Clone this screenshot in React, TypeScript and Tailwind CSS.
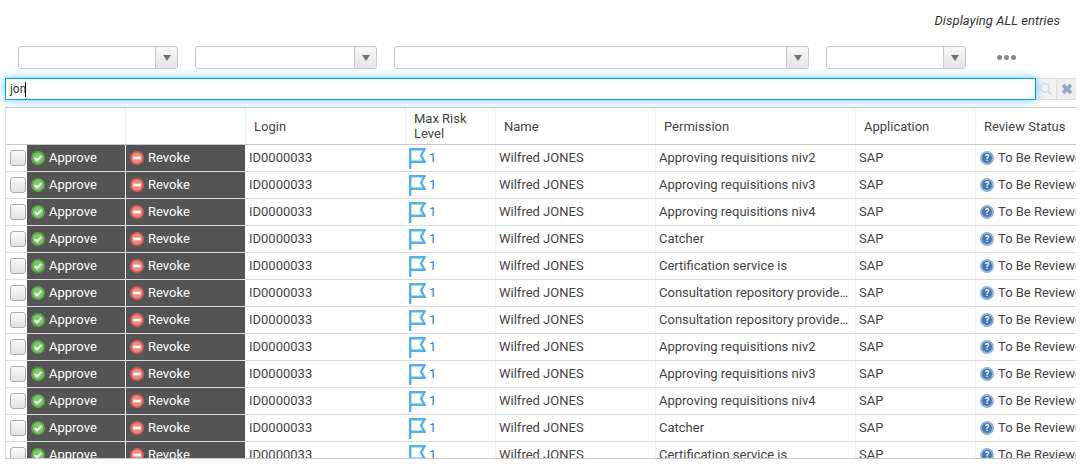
import React from "react";

const perms = [
  "Approving requisitions niv2",
  "Approving requisitions niv3",
  "Approving requisitions niv4",
  "Catcher",
  "Certification service is",
  "Consultation repository provided by the service",
  "Consultation repository provided by the service",
  "Approving requisitions niv2",
  "Approving requisitions niv3",
  "Approving requisitions niv4",
  "Catcher",
  "Certification service is",
];

function Select({ w }: { w: string }) {
  return (
    <div className={`${w} flex h-[23px] rounded-[3px] border border-[#c8c8c8] bg-white`}>
      <div className="flex-1" />
      <div className="flex w-[22px] items-center justify-center rounded-r-[2px] border-l border-[#c8c8c8] bg-gradient-to-b from-[#f8f8f8] to-[#e4e4e4]">
        <svg width="8" height="6" viewBox="0 0 8 6"><path d="M0 0h8L4 6z" fill="#707070" /></svg>
      </div>
    </div>
  );
}

function ApproveIcon() {
  return (
    <svg width="14" height="14" viewBox="0 0 14 14" className="shrink-0">
      <circle cx="7" cy="7" r="7" fill="#56a845" />
      <circle cx="7" cy="7" r="5.2" fill="#7cc86a" />
      <path d="M3.8 7.2l2.3 2.3L10.4 4.8" fill="none" stroke="#fff" strokeWidth="1.9" />
    </svg>
  );
}

function RevokeIcon() {
  return (
    <svg width="14" height="14" viewBox="0 0 14 14" className="shrink-0">
      <circle cx="7" cy="7" r="7" fill="#dc5a52" />
      <circle cx="7" cy="7" r="5.2" fill="#ef8d84" />
      <rect x="3.3" y="5.7" width="7.4" height="2.6" fill="#fff" />
    </svg>
  );
}

function FlagIcon() {
  return (
    <svg width="17" height="21" viewBox="0 0 17 21" className="shrink-0">
      <path d="M1.2 21V1.3h14.4L12 7.5l3.6 6.3H1.2" fill="none" stroke="#52b4e6" strokeWidth="2.4" />
    </svg>
  );
}

function HelpIcon() {
  return (
    <svg width="14" height="14" viewBox="0 0 14 14" className="shrink-0">
      <circle cx="7" cy="7" r="7" fill="#8fb0d8" />
      <circle cx="7" cy="7" r="4.9" fill="#4377b4" />
      <text x="7" y="10" textAnchor="middle" fontSize="8.5" fontWeight="700" fill="#fff" fontFamily="Roboto, sans-serif">?</text>
    </svg>
  );
}

const cols = "grid grid-cols-[120px_119px_160px_90px_160px_200px_120px_120px]";

function Head({ children }: { children?: React.ReactNode }) {
  return (
    <div className="flex items-center border-l border-[#f0f0f0] pl-[8px] text-[13px] leading-[15px] text-[#444]">
      {children}
    </div>
  );
}

function Row({ perm }: { perm: string }) {
  return (
    <div className={`${cols} h-[27px] border-b border-[#dcdcdc] text-[13px] leading-[26px] text-[#444]`}>
      <div className="flex">
        <div className="flex w-[21px] items-center pl-[4px]">
          <div className="h-[16px] w-[16px] rounded-[3px] border border-[#aaa] bg-gradient-to-b from-[#fafafa] to-[#e2e2e2]" />
        </div>
        <div className="flex flex-1 items-center gap-[4px] border-r border-[#eee] bg-[#545454] pl-[4px] text-white">
          <ApproveIcon />
          Approve
        </div>
      </div>
      <div className="flex items-center gap-[4px] bg-[#545454] pl-[4px] text-white">
        <RevokeIcon />
        Revoke
      </div>
      <div className="pl-[4px]">ID0000033</div>
      <div className="flex items-center gap-[3px] pl-[4px] text-[#2c7fc0]">
        <FlagIcon />
        1
      </div>
      <div className="border-l border-[#f0f0f0] pl-[3px]">Wilfred JONES</div>
      <div className="truncate border-l border-[#f0f0f0] pl-[3px] pr-[5px]">{perm}</div>
      <div className="border-l border-[#f0f0f0] pl-[3px]">SAP</div>
      <div className="flex items-center gap-[4px] overflow-hidden whitespace-nowrap border-l border-[#f0f0f0] pl-[4px]">
        <HelpIcon />
        To Be Reviewed
      </div>
    </div>
  );
}

export default function App() {
  return (
    <div className="h-[468px] w-[1086px] overflow-hidden bg-white font-['Roboto',sans-serif]">
      <div className="flex h-[46px] items-start justify-end pr-[26px] pt-[13px] text-[13px] italic leading-[15px] tracking-[0.05px] text-[#333]">
        Displaying ALL entries
      </div>
      <div className="flex h-[23px] items-center gap-[17px] pl-[18px]">
        <Select w="w-[160px]" />
        <Select w="w-[182px]" />
        <Select w="w-[415px]" />
        <Select w="w-[140px]" />
        <div className="ml-[14px] flex gap-[2px]">
          <span className="h-[5px] w-[5px] rounded-full bg-[#888]" />
          <span className="h-[5px] w-[5px] rounded-full bg-[#888]" />
          <span className="h-[5px] w-[5px] rounded-full bg-[#888]" />
        </div>
      </div>
      <div className="mt-[9px] flex h-[22px] pl-[5px]">
        <div className="relative z-10 flex w-[1031px] items-center border border-[#0c9ff0] bg-white pl-[4px] text-[12px] text-[#333] shadow-[0_0_8px_#5fc0f8]">
          <span>jon</span>
          <span className="-ml-[1px] h-[15px] w-[1px] bg-black" />
        </div>
        <div className="flex w-[21px] items-center justify-center border-y border-r border-[#dcdcdc] bg-[#f2f2f2]">
          <svg width="14" height="14" viewBox="0 0 14 14"><circle cx="5.8" cy="5.8" r="4.3" fill="none" stroke="#d3dfe8" strokeWidth="1.8" /><path d="M9 9l4 4" stroke="#d3dfe8" strokeWidth="2.2" /></svg>
        </div>
        <div className="flex w-[19px] items-center justify-center border-y border-[#dcdcdc] bg-[#efefef]">
          <svg width="12" height="12" viewBox="0 0 12 12"><path d="M2 2l8 8M10 2l-8 8" stroke="#8fa6c8" strokeWidth="3.4" /></svg>
        </div>
      </div>
      <div className="ml-[5px] mt-[7px] h-[352px] w-[1071px] overflow-hidden border-x border-y border-x-[#dcdcdc] border-y-[#c8c8c8] border-r-0">
        <div className={`${cols} h-[37px] border-b border-[#c8c8c8]`}>
          <div className="border-r border-[#f0f0f0]" />
          <div />
          <Head>Login</Head>
          <Head>
            <span className="w-[60px]">Max Risk Level</span>
          </Head>
          <Head>Name</Head>
          <Head>Permission</Head>
          <Head>Application</Head>
          <Head>Review Status</Head>
        </div>
        {perms.map((p, i) => (
          <Row key={i} perm={p} />
        ))}
      </div>
    </div>
  );
}
